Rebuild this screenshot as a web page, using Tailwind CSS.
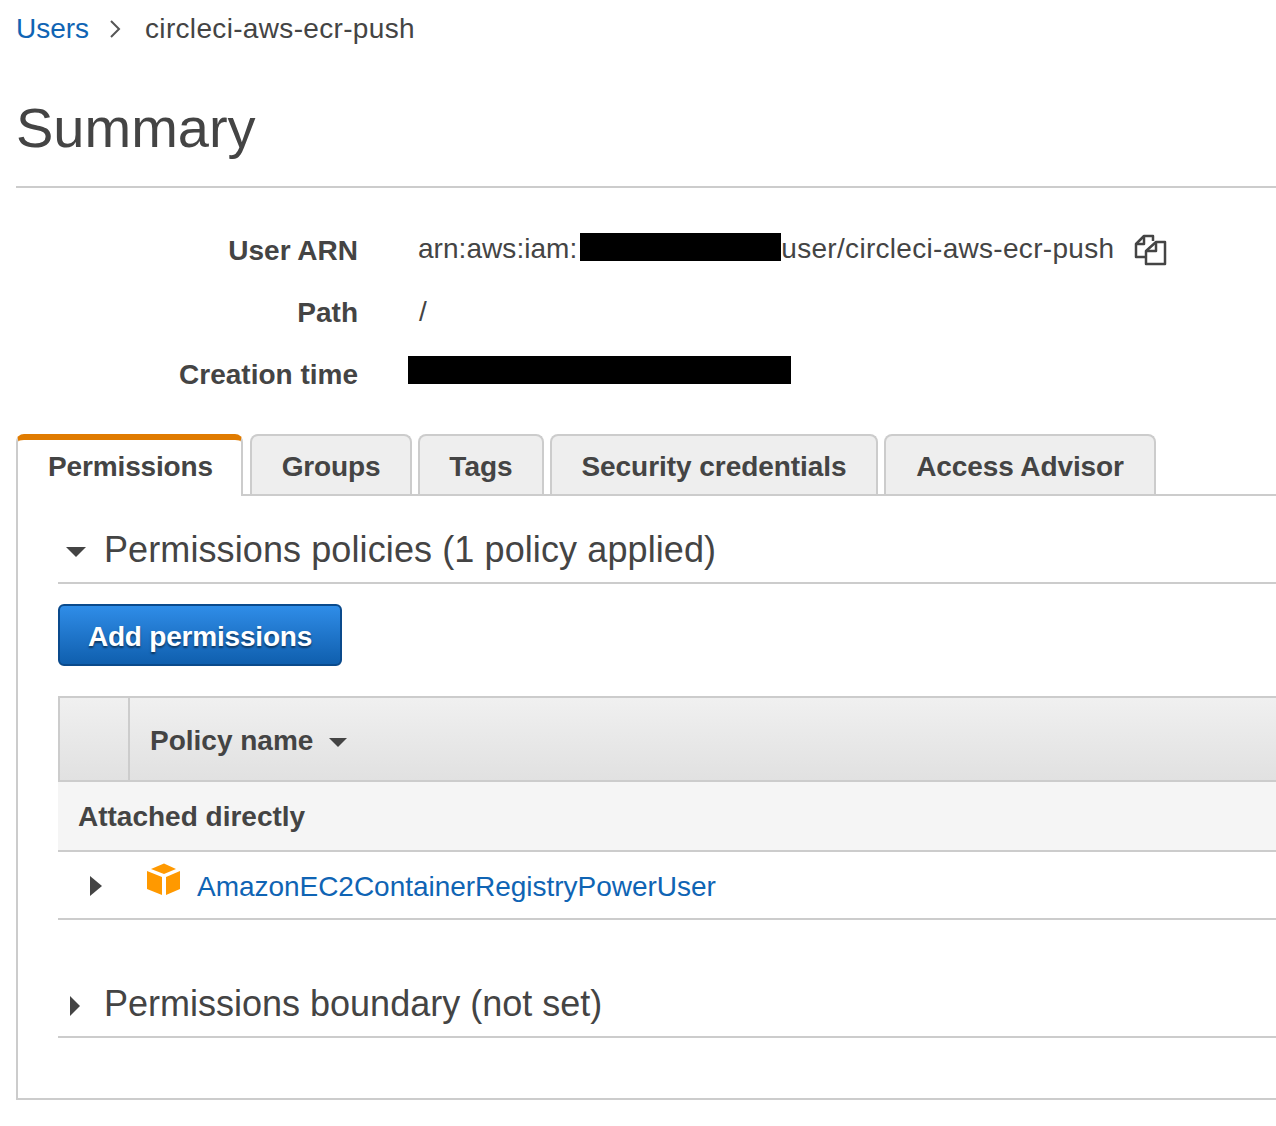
<!DOCTYPE html>
<html><head><meta charset="utf-8"><script src="https://cdn.jsdelivr.net/npm/@tailwindcss/browser@4"></script></head>
<body class="bg-white overflow-hidden">
<div class="w-[1276px] h-[1126px] overflow-hidden pl-4 font-['Liberation_Sans',Arial,sans-serif] text-[#444] text-[28px] leading-[32px]">
  <div class="h-[58px] pt-[13px] flex items-start">
    <a class="text-[#0f64b4] w-[88px]">Users</a>
    <svg class="w-[14px] h-[20px] mt-[6px] ml-[5px]" viewBox="0 0 14 20" fill="none" stroke="#555" stroke-width="2"><path d="M2 2l8 8-8 8"/></svg>
    <span class="ml-[22px] tracking-[0.33px] text-[#444]">circleci-aws-ecr-push</span>
  </div>
  <h1 class="text-[56px] leading-[64px] box-content h-[90px] border-b-2 border-[#ccc] pt-[38px] font-normal text-[#444]">Summary</h1>
  <div class="pt-[47px] flex flex-col">
    <div class="flex h-[62px] items-start">
      <div class="w-[342px] text-right font-bold">User ARN</div>
      <div class="ml-[60px] flex items-start -mt-[2px]">
        <span class="tracking-[0.05px]">arn:aws:iam:</span><span class="w-[201px] h-[28px] bg-black ml-[3px]"></span><span class="tracking-[0.3px]">user/circleci-aws-ecr-push</span>
        <svg class="w-[34px] h-[32px] ml-[20px] mt-[1px]" viewBox="0 0 34 32" fill="none" stroke="#444" stroke-width="2.500" stroke-linejoin="round"><path d="M12 23H2V10L10 2H19V7"/><path d="M10 2V10H2"/><path d="M22 8H31V30H12V17Z"/><path d="M22 8V17H12"/></svg>
      </div>
    </div>
    <div class="flex h-[62px] items-start">
      <div class="w-[342px] text-right font-bold">Path</div>
      <div class="ml-[61px] -mt-[1px]">/</div>
    </div>
    <div class="flex h-[60px] items-start">
      <div class="w-[342px] text-right font-bold">Creation time</div>
      <div class="ml-[50px] -mt-[3px] w-[383px] h-[28px] bg-black"></div>
    </div>
  </div>
  <div class="flex h-[62px] items-end border-b-2 border-[#ccc] font-bold text-[#444] mt-[15px] relative">
    <div class="relative z-10 w-[227px] h-[62px] -mb-[2px] bg-white border-t-[6px] border-x-2 border-[#ccc] border-t-[#e07b00] rounded-t-[8px] text-center pt-[11px] pl-[2px] tracking-[-0.15px]">Permissions</div>
    <div class="ml-[7px] w-[162px] h-[60px] bg-[#eee] border-2 border-b-0 border-[#ccc] rounded-t-[8px] text-center pt-[15px] tracking-[-0.15px]">Groups</div>
    <div class="ml-[6px] w-[126px] h-[60px] bg-[#eee] border-2 border-b-0 border-[#ccc] rounded-t-[8px] text-center pt-[15px]">Tags</div>
    <div class="ml-[6px] w-[328px] h-[60px] bg-[#eee] border-2 border-b-0 border-[#ccc] rounded-t-[8px] text-center pt-[15px] tracking-[-0.05px]">Security credentials</div>
    <div class="ml-[6px] w-[272px] h-[60px] bg-[#eee] border-2 border-b-0 border-[#ccc] rounded-t-[8px] text-center pt-[15px] tracking-[-0.1px]">Access Advisor</div>
  </div>
  <div class="border-l-2 border-b-2 border-[#ccc] h-[604px] pl-10">
    <div class="h-[88px] border-b-2 border-[#ccc] flex items-center pt-[22px]">
      <svg class="w-5 h-[10px] ml-[8px] mt-1" viewBox="0 0 20 10" fill="#444"><path d="M0 0h20L10 10z"/></svg>
      <span class="ml-[18px] text-[36px] leading-[40px] tracking-[0.1px] text-[#444]">Permissions policies (1 policy applied)</span>
    </div>
    <div class="mt-[20px] w-[284px] h-[62px] rounded-[6px] border-2 border-[#0a4a8c] bg-gradient-to-b from-[#2f8de8] to-[#0f5fae] text-white font-bold tracking-[-0.2px] pt-[3px] flex items-center justify-center [text-shadow:0_2px_2px_rgba(0,0,0,0.5)]">Add permissions</div>
    <div class="mt-[30px] h-[86px] bg-gradient-to-b from-[#f0f0f0] to-[#e1e1e1] border-y-2 border-l-2 border-[#ccc] flex font-bold">
      <div class="w-[70px] border-r-2 border-[#ccc]"></div>
      <div class="flex items-center pl-5 pt-[4px]">
        <span>Policy name</span>
        <svg class="w-[18px] h-[9px] ml-[16px] mt-[3px]" viewBox="0 0 18 9" fill="#444"><path d="M0 0h18L9 9z"/></svg>
      </div>
    </div>
    <div class="h-[70px] bg-[#f5f5f5] border-b-2 border-[#ccc] flex items-center pl-5 pt-[2px] font-bold">Attached directly</div>
    <div class="h-[68px] border-b-2 border-[#ccc] flex items-center pt-[4px]">
      <svg class="w-[12px] h-[20px] ml-[32px] -mt-[2px]" viewBox="0 0 12 20" fill="#444"><path d="M0 0l12 10L0 20z"/></svg>
      <svg class="w-[34px] h-[34px] ml-[45px] -mt-[14px]" viewBox="0 0 34 34" fill="#f90"><path d="M4 6L17 0.500 29 6 17 11z"/><path d="M0 8l15 6v18L0 26z"/><path d="M33 8l-14 6v18l14-6z"/></svg>
      <a class="ml-[16px] tracking-[-0.03px] text-[#0f64b4]">AmazonEC2ContainerRegistryPowerUser</a>
    </div>
    <div class="mt-[50px] h-[68px] border-b-2 border-[#ccc] flex items-center pt-[2px]">
      <svg class="w-[10px] h-[20px] ml-[12px] mt-[4px]" viewBox="0 0 10 20" fill="#444"><path d="M0 0l10 10L0 20z"/></svg>
      <span class="ml-[24px] text-[36px] leading-[40px]">Permissions boundary (not set)</span>
    </div>
  </div>
</div>
</body></html>
